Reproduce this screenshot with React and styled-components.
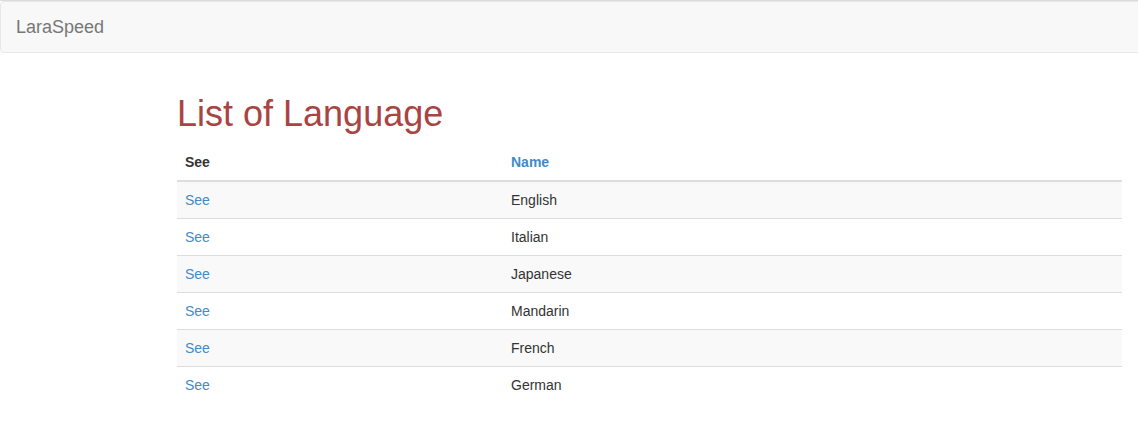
import styled, { createGlobalStyle } from 'styled-components'

const GlobalStyle = createGlobalStyle`
    html, body {
        margin : 0;
        padding : 0;
        background : #fff;
        overflow-x : hidden;
    }
    body {
        font-family : "Liberation Sans", Arial, Helvetica, sans-serif;
        font-size : 14px;
        line-height : 20px;
        color : #333;
        border-top : 1px solid #dcdcdc;
    }
`
const Navbar = styled.nav`
    height : 50px;
    background-color : #f8f8f8;
    border : 1px solid #e7e7e7;
    border-radius : 4px;
    display : flex;
    align-items : center;
    padding : 0 15px;
    margin : 0 -8px 21px 0;
`
const Brand = styled.a`
    font-size : 18px;
    line-height : 20px;
    color : #777;
    text-decoration : none;
`
const Content = styled.main`
    display : flow-root;
    padding : 0 16px 0 177px;
`
const Title = styled.h1`
    font-size : 36px;
    font-weight : 500;
    line-height : 1.1;
    color : #a94442;
    margin : 20px 0 10px;
`
const Table = styled.table`
    width : 100%;
    border-collapse : collapse;
    border-spacing : 0;
`
const HeadCell = styled.th`
    text-align : left;
    font-weight : bold;
    padding : 8px;
    line-height : 20px;
    border-bottom : 2px solid #ddd;
    color : ${props => props.link ? '#428bca' : '#333'};
    width : ${props => props.width || 'auto'};
`
const Row = styled.tr`
    background-color : ${props => props.striped ? '#f9f9f9' : '#fff'};
`
const Cell = styled.td`
    padding : 8px;
    line-height : 20px;
    border-top : ${props => props.first ? 'none' : '1px solid #ddd'};
`
const Link = styled.a`
    color : #428bca;
    text-decoration : none;
`

const languages = ['English', 'Italian', 'Japanese', 'Mandarin', 'French', 'German']

const App = () => {
    return (
        <>
            <GlobalStyle />
            <Navbar>
                <Brand href="#">LaraSpeed</Brand>
            </Navbar>
            <Content>
                <Title>List of Language</Title>
                <Table>
                    <thead>
                        <tr>
                            <HeadCell width="310px">See</HeadCell>
                            <HeadCell link>Name</HeadCell>
                        </tr>
                    </thead>
                    <tbody>
                        {languages.map((lang, i) => (
                            <Row key={lang} striped={i % 2 === 0}>
                                <Cell first={i === 0}><Link href="#">See</Link></Cell>
                                <Cell first={i === 0}>{lang}</Cell>
                            </Row>
                        ))}
                    </tbody>
                </Table>
            </Content>
        </>
    )
}

export default App
